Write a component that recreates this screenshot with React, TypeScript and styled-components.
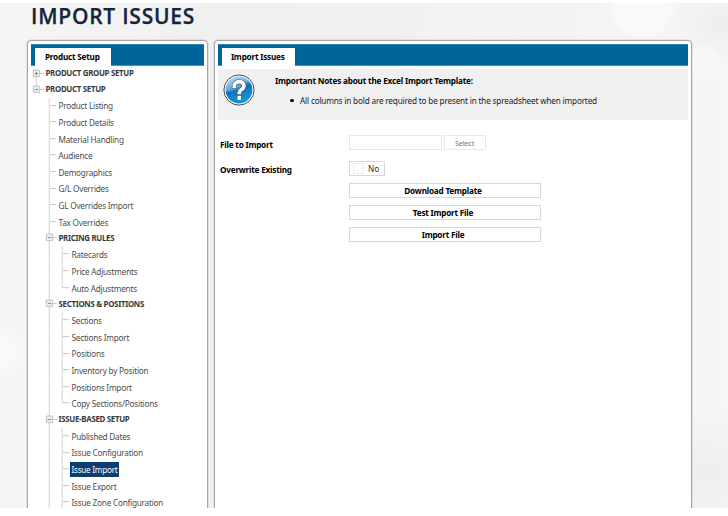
import React from "react";
import styled, { createGlobalStyle, css } from "styled-components";

const GlobalStyle = createGlobalStyle`
  * { box-sizing: border-box; }
  body {
    margin: 0;
    background: #fff;
    overflow: hidden;
    font-family: "Noto Sans", "Open Sans", sans-serif;
    font-size: 8.2px;
    letter-spacing: -0.22px;
    color: #000;
  }
`;

const Page = styled.div`
  width: 728px;
  height: 505px;
  margin-top: 3px;
  overflow: hidden;
  display: flex;
  flex-direction: column;
  background:
    radial-gradient(circle at 642px 2px, #f9f9f9 0 28px, transparent 36px),
    radial-gradient(circle at 704px 60px, #f8f8f8 0 12px, transparent 19px),
    radial-gradient(circle at 0px 350px, #f9f9f9 0 10px, transparent 30px),
    radial-gradient(ellipse at 704px 470px, #eeeeee 0, transparent 100px),
    radial-gradient(ellipse at 728px 20px, #ededed 0, transparent 60px),
    linear-gradient(90deg, #f5f5f5 0, #f0f0f0 30%, #f1f1f1 55%, #f6f6f6 100%);
`;

const Title = styled.h1`
  margin: 0;
  height: 37px;
  padding: 0 0 0 31px;
  font-family: "Open Sans", sans-serif;
  font-size: 21px;
  font-weight: 600;
  line-height: 26px;
  letter-spacing: 0.75px;
  color: #15253b;
  -webkit-text-stroke: 0.25px #15253b;
`;

const Columns = styled.div`
  flex: 1;
  min-height: 0;
  display: flex;
  gap: 6px;
  padding-left: 27px;
`;

const Panel = styled.section<{ $width: number }>`
  width: ${(p) => p.$width}px;
  height: 520px;
  flex: none;
  padding: 3px 3px 0;
  border: 1px solid #a5a5a5;
  border-radius: 4px 4px 0 0;
  box-shadow: 0 0 0 0.5px #cfcfcf;
  background: #fff;
`;

const TabBar = styled.header`
  display: flex;
  align-items: flex-end;
  height: 22px;
  padding-left: 4px;
  background: #006699;
  border-top: 1px solid #2f83b0;
  border-bottom: 1px solid #4594bd;
`;

const Tab = styled.div<{ $width: number }>`
  width: ${(p) => p.$width}px;
  height: 18px;
  margin-bottom: -1px;
  padding-right: 1.5px;
  background: #fff;
  text-align: center;
  font-weight: 700;
  line-height: 18px;
`;

const Tree = styled.nav`
  margin-top: -0.4px;
`;

const Row = styled.div<{ $section: boolean }>`
  display: flex;
  height: ${(p) => (p.$section ? 16 : 16.62)}px;
  margin-left: -1px;
`;

const Guide = styled.svg`
  display: block;
  flex: none;
  width: 13px;
  height: 100%;
  overflow: visible;
`;

const Label = styled.span<{ $section: boolean; $active?: boolean }>`
  align-self: center;
  margin-left: 0.5px;
  padding: 0 2px;
  line-height: 15px;
  white-space: nowrap;
  color: #4c4c4c;
  ${(p) =>
    p.$section &&
    css`
      font-size: 7.9px;
      font-weight: 700;
      letter-spacing: -0.31px;
      color: #3a3a3a;
    `}
  ${(p) =>
    p.$active &&
    css`
      background: #0b3d70;
      color: #fff;
      letter-spacing: -0.27px;
    `}
`;

type Line = "full" | "upper" | "lower" | "none";
type Node = { text: string; level: number; section?: "open" | "closed"; last?: boolean; active?: boolean };

const leaves = (level: number, names: string[], closed = true): Node[] =>
  names.map((text, i) => ({ text, level, last: closed && i === names.length - 1, active: text === "Issue Import" }));

const nodes: Node[] = [
  { text: "PRODUCT GROUP SETUP", level: 0, section: "closed" },
  { text: "PRODUCT SETUP", level: 0, section: "open", last: true },
  ...leaves(1, ["Product Listing", "Product Details", "Material Handling", "Audience", "Demographics", "G/L Overrides", "GL Overrides Import", "Tax Overrides"], false),
  { text: "PRICING RULES", level: 1, section: "open" },
  ...leaves(2, ["Ratecards", "Price Adjustments", "Auto Adjustments"]),
  { text: "SECTIONS & POSITIONS", level: 1, section: "open" },
  ...leaves(2, ["Sections", "Sections Import", "Positions", "Inventory by Position", "Positions Import", "Copy Sections/Positions"]),
  { text: "ISSUE-BASED SETUP", level: 1, section: "open" },
  ...leaves(2, ["Published Dates", "Issue Configuration", "Issue Import", "Issue Export", "Issue Zone Configuration"], false),
];

const lineFor = (node: Node, index: number): Line => {
  if (index === 0) return "lower";
  return node.last ? "upper" : "full";
};

function Connector({ line, tick, box }: { line: Line; tick?: boolean; box?: "open" | "closed" }) {
  const top = line === "lower" ? "50%" : "0";
  const bottom = line === "upper" ? "50%" : "100%";
  return (
    <Guide>
      {line !== "none" && <line x1="6.2" x2="6.2" y1={top} y2={bottom} stroke="#d2d2d2" />}
      {tick && <line x1="7" x2={box ? 14 : 13} y1="46%" y2="46%" stroke="#c9c9c9" />}
      {box && (
        <svg y="50%" overflow="visible">
          <rect x="3.300" y="-4" width="6.400" height="6.600" rx="0.600" fill="#ececec" stroke="#bcbcbc" strokeWidth="0.9" />
          <path d={box === "open" ? "M4.900 -.5h3.300" : "M4.900 -.5h3.300M6.500 -2.200v3.400"} stroke="#858585" strokeWidth="0.9" />
        </svg>
      )}
    </Guide>
  );
}

function TreeRow({ node, index }: { node: Node; index: number }) {
  return (
    <Row $section={!!node.section}>
      {node.level > 0 && <Connector line="none" />}
      {node.level > 1 && <Connector line="full" />}
      <Connector line={lineFor(node, index)} tick box={node.section} />
      <Label $section={!!node.section} $active={node.active}>{node.text}</Label>
    </Row>
  );
}

const Notice = styled.div`
  display: flex;
  height: 51px;
  margin-top: 3px;
  background: #f0f0f0;
`;

const HelpIcon = styled.svg`
  display: block;
  flex: none;
  width: 32px;
  height: 32px;
  margin: 5px 20px 0 5px;
`;

const NoticeText = styled.div`
  padding-top: 5px;
  white-space: nowrap;
`;

const NoticeTitle = styled.div`
  font-weight: 700;
  line-height: 13px;
  letter-spacing: -0.19px;
`;

const NoticeItem = styled.div`
  display: flex;
  align-items: center;
  gap: 6.5px;
  margin: 7px 0 0 15px;
  line-height: 13px;
  letter-spacing: -0.175px;
  color: #222;
  &::before {
    content: "";
    width: 3.5px;
    height: 3.5px;
    border-radius: 50%;
    background: #111;
  }
`;

const Form = styled.div`
  display: grid;
  grid-template-columns: 129px auto;
  justify-content: start;
  padding: 15px 0 0 2px;
`;

const FieldLabel = styled.label<{ $offset: number }>`
  padding-top: ${(p) => p.$offset}px;
  font-weight: 700;
  line-height: 13px;
`;

const FieldControls = styled.div<{ $height: number }>`
  display: flex;
  align-items: flex-start;
  gap: 2px;
  height: ${(p) => p.$height}px;
`;

const FileInput = styled.input`
  width: 93px;
  height: 15px;
  border: 1px solid #e8e8ea;
  background: #fff;
`;

const SelectButton = styled.button`
  width: 42px;
  height: 15px;
  padding: 0 1px 0 0;
  border: 1px solid #e8e8ea;
  background: #fff;
  font: 7.3px/12px "Noto Sans", sans-serif;
  letter-spacing: -0.18px;
  color: #777;
`;

const Toggle = styled.div`
  display: flex;
  align-items: center;
  gap: 4px;
  width: 36px;
  height: 15px;
  padding-left: 3px;
  border: 1px solid #d8d8d8;
  line-height: 13px;
  letter-spacing: 0;
  color: #333;
  &::before {
    content: "";
    width: 9px;
    height: 9px;
    border: 1px solid #ececec;
  }
`;

const Actions = styled.div`
  grid-column: 2;
  display: flex;
  flex-direction: column;
  gap: 7px;
`;

const ActionButton = styled.button`
  width: 192px;
  height: 15px;
  padding: 0 4px 0 0;
  border: 1px solid #d8d8d8;
  background: #fff;
  font: 700 8.2px/12px "Noto Sans", sans-serif;
  letter-spacing: -0.22px;
  color: #000;
`;

function Help() {
  return (
    <HelpIcon viewBox="0 0 32 32">
      <defs>
        <linearGradient id="orb" x1="0" y1="0" x2="0.35" y2="1">
          <stop offset="0" stopColor="#b9dcf3" />
          <stop offset="0.45" stopColor="#3b97d3" />
          <stop offset="0.55" stopColor="#0d70b8" />
          <stop offset="1" stopColor="#1596dc" />
        </linearGradient>
      </defs>
      <circle cx="16" cy="16" r="15.1" fill="#fff" stroke="#4b4b4b" strokeWidth="1" />
      <circle cx="16" cy="16" r="13.4" fill="url(#orb)" />
      <path d="M3 18C10 18 20 14 25 6.200A13.400 13.400 0 0 0 3 18Z" fill="#fff" opacity="0.22" />
      <path d="M11.300 12.300C11.300 6.200 21 6.200 21 12C21 15.500 16.300 15.600 16.300 18.500M16.300 23.600v.5" fill="none" stroke="#3d5364" strokeWidth="5" strokeLinecap="square" strokeLinejoin="round" />
      <path d="M11.300 12.300C11.300 6.200 21 6.200 21 12C21 15.500 16.300 15.600 16.300 18.500M16.300 23.600v.5" fill="none" stroke="#fff" strokeWidth="3.700" strokeLinecap="square" strokeLinejoin="round" />
    </HelpIcon>
  );
}

export default function App() {
  return (
    <>
      <GlobalStyle />
      <Page>
        <Title>IMPORT ISSUES</Title>
        <Columns>
          <Panel $width={181}>
            <TabBar><Tab $width={76}>Product Setup</Tab></TabBar>
            <Tree>
              {nodes.map((node, i) => <TreeRow key={node.text} node={node} index={i} />)}
            </Tree>
          </Panel>
          <Panel $width={478}>
            <TabBar><Tab $width={73}>Import Issues</Tab></TabBar>
            <Notice>
              <Help />
              <NoticeText>
                <NoticeTitle>Important Notes about the Excel Import Template:</NoticeTitle>
                <NoticeItem>All columns in bold are required to be present in the spreadsheet when imported</NoticeItem>
              </NoticeText>
            </Notice>
            <Form>
              <FieldLabel $offset={3}>File to Import</FieldLabel>
              <FieldControls $height={26}>
                <FileInput />
                <SelectButton>Select</SelectButton>
              </FieldControls>
              <FieldLabel $offset={1.5}>Overwrite Existing</FieldLabel>
              <FieldControls $height={22}><Toggle>No</Toggle></FieldControls>
              <Actions>
                <ActionButton>Download Template</ActionButton>
                <ActionButton>Test Import File</ActionButton>
                <ActionButton>Import File</ActionButton>
              </Actions>
            </Form>
          </Panel>
        </Columns>
      </Page>
    </>
  );
}
